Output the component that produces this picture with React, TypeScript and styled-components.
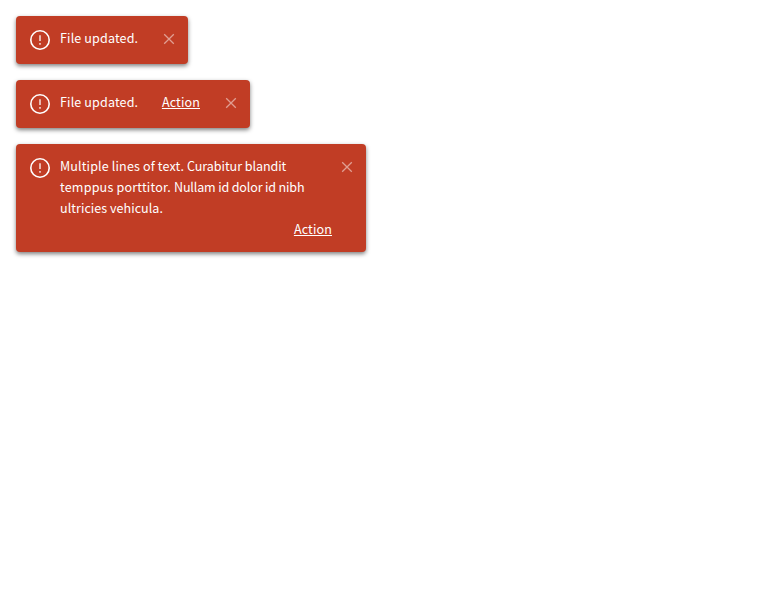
import React from "react";
import styled, { createGlobalStyle } from "styled-components";

const GlobalStyle = createGlobalStyle`
  body {
    margin: 0;
    background: #fff;
  }
`;

const ToastList = styled.div`
  display: flex;
  flex-direction: column;
  align-items: flex-start;
  gap: 16px;
  padding: 16px;
`;

const Toast = styled.div<{ $width: number }>`
  box-sizing: border-box;
  display: flex;
  align-items: flex-start;
  width: ${(p) => p.$width}px;
  padding: 12px;
  border-radius: 4px;
  background: #c13d25;
  box-shadow: 0 2px 4px rgba(0, 0, 0, 0.5);
  color: #fff;
  font: 400 12.55px/21px "Noto Sans CJK SC", "Noto Sans", sans-serif;
`;

const StatusIcon = styled.svg`
  flex: none;
  width: 24px;
  height: 24px;
  margin-right: 8px;
`;

const Content = styled.div<{ $stacked?: boolean }>`
  display: flex;
  flex: 1;
  flex-direction: ${(p) => (p.$stacked ? "column" : "row")};
  justify-content: space-between;
  min-width: 0;
  margin: -1px 0 1px;
`;

const Message = styled.div`
  white-space: pre;
`;

const Line = styled.div`
  height: 21px;
`;

const Phrase = styled.span<{ $spacing: number }>`
  letter-spacing: ${(p) => p.$spacing}px;
`;

const ActionLink = styled.a`
  align-self: flex-end;
  color: inherit;
  letter-spacing: 0.13px;
  text-decoration: underline;
  cursor: pointer;
`;

const CloseButton = styled.button<{ $gap: number }>`
  flex: none;
  display: flex;
  width: 14px;
  height: 24px;
  margin-left: ${(p) => p.$gap}px;
  padding: 4px 0 0;
  border: 0;
  background: none;
  color: #fff;
  opacity: 0.5;
`;

function AlertIcon() {
  return (
    <StatusIcon viewBox="0 0 24 24" fill="none" stroke="currentColor">
      <circle cx="12" cy="12" r="9.2" strokeWidth="1.6" />
      <path d="M12 7.2v5.7M12 15v1.7" strokeWidth="1.5" strokeOpacity="0.85" />
    </StatusIcon>
  );
}

function Close({ gap = 24 }: { gap?: number }) {
  return (
    <CloseButton aria-label="Close" $gap={gap}>
      <svg width="14" height="14" viewBox="0 0 14 14" fill="none" stroke="currentColor" strokeWidth="1.3">
        <path d="M2.2 2.2l9.6 9.6M11.8 2.2l-9.6 9.6" />
      </svg>
    </CloseButton>
  );
}

export default function App() {
  return (
    <>
      <GlobalStyle />
      <ToastList>
        <Toast $width={172}>
          <AlertIcon />
          <Content>
            <Message>
              <Phrase $spacing={0.13}>File updated.</Phrase>
            </Message>
          </Content>
          <Close />
        </Toast>
        <Toast $width={234}>
          <AlertIcon />
          <Content>
            <Message>
              <Phrase $spacing={0.13}>File updated.</Phrase>
            </Message>
            <ActionLink>Action</ActionLink>
          </Content>
          <Close />
        </Toast>
        <Toast $width={350}>
          <AlertIcon />
          <Content $stacked>
            <Message>
              <Line>
                <Phrase $spacing={0.13}>{"Multiple lines of text. "}</Phrase>
                <Phrase $spacing={-0.06}>Curabitur blandit</Phrase>
              </Line>
              <Line>
                <Phrase $spacing={0.19}>{"temppus porttitor. "}</Phrase>
                <Phrase $spacing={-0.16}>Nullam id dolor id nibh</Phrase>
              </Line>
              <Line>
                <Phrase $spacing={0.03}>ultricies vehicula.</Phrase>
              </Line>
            </Message>
            <ActionLink>Action</ActionLink>
          </Content>
          <Close gap={8} />
        </Toast>
      </ToastList>
    </>
  );
}
